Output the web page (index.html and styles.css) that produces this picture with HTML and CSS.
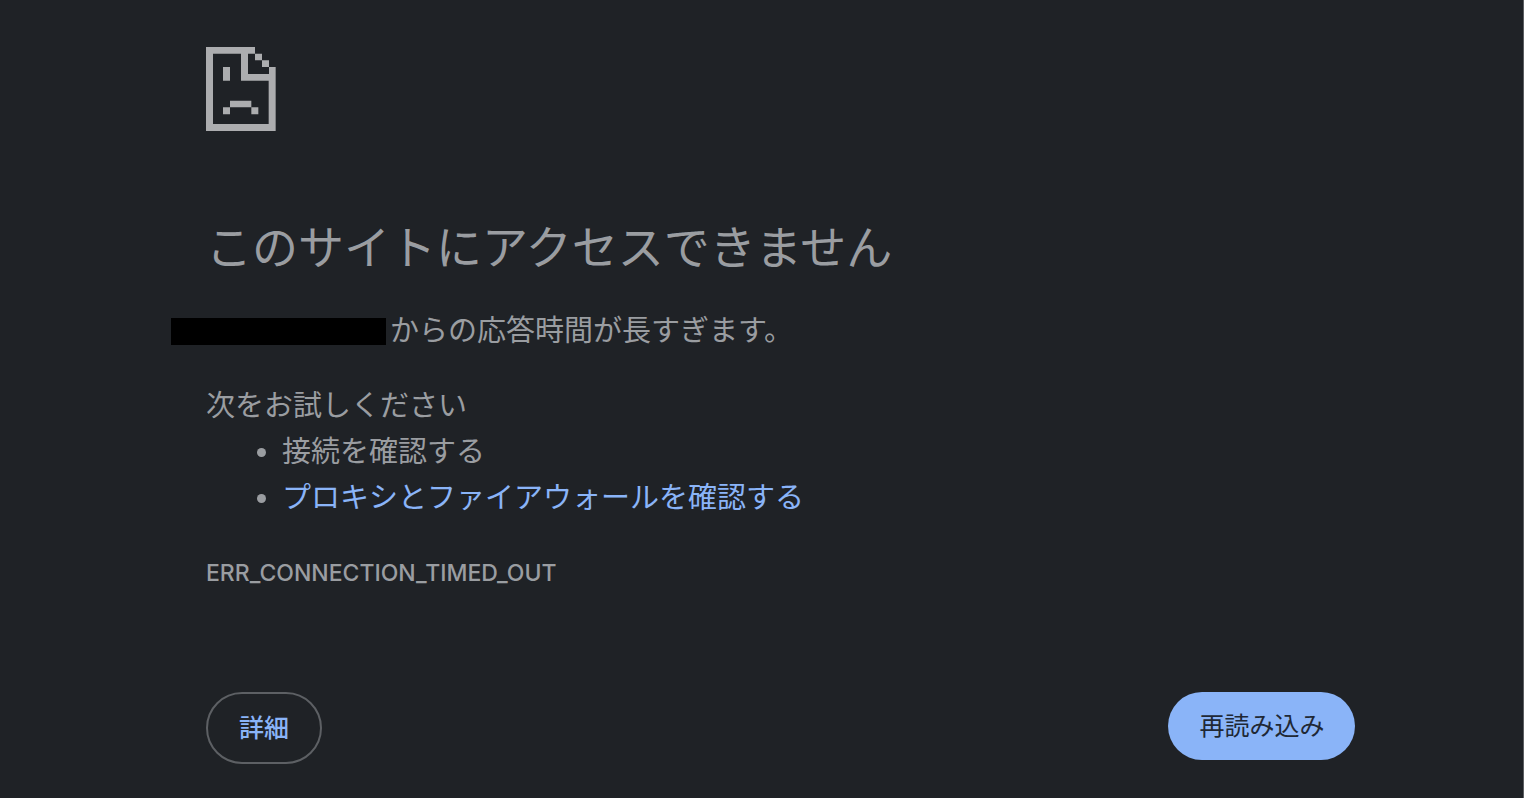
FILE: index.html
```html
<!DOCTYPE html>
<html lang="ja">
<head>
<meta charset="utf-8">
<meta name="viewport" content="width=device-width, initial-scale=1">
<title>このサイトにアクセスできません</title>
<link rel="stylesheet" href="styles.css">
</head>
<body>
<main class="error-page">
  <svg class="error-icon" viewBox="0 0 210 252" aria-hidden="true">
    <path d="M0 0H147V20H126V81H189V60H209V252H0ZM21 20V231H188V101H105V20Z" fill-rule="evenodd"/>
    <path d="M147 20H168V40H147ZM168 40H189V60H168ZM51 60H72V101H51ZM72 161H136V181H72ZM51 181H72V202H51ZM136 181H157V202H136Z"/>
  </svg>
  <h1 class="title">このサイトにアクセスできません</h1>
  <p class="summary"><span class="redacted"></span>からの応答時間が長すぎます。</p>
  <section class="suggestions">
    <p class="suggestions-label">次をお試しください</p>
    <ul class="suggestions-list">
      <li>接続を確認する</li>
      <li><a class="link" href="#proxy">プロキシとファイアウォールを確認する</a></li>
    </ul>
  </section>
  <p class="error-code">ERR_CONNECTION_TIMED_OUT</p>
  <div class="actions">
    <button class="button button-details" type="button">詳細</button>
    <button class="button button-reload" type="button">再読み込み</button>
  </div>
</main>
</body>
</html>
```
FILE: styles.css
```css
* {
  box-sizing: border-box;
}

body {
  margin: 0;
  min-height: 100vh;
  background: #1f2226;
  border-right: 1px solid #5c5f62;
  color: #9a9da1;
  font-family: Roboto, "Noto Sans CJK JP", sans-serif;
  font-size: 29px;
  line-height: 46px;
}

.error-page {
  display: flex;
  flex-direction: column;
  padding: 47px 11% 32px 206px;
}

.error-icon {
  display: block;
  width: 70px;
  height: 84px;
  fill: #acadaf;
}

.title {
  margin: 83px 0 0;
  font-size: 46px;
  font-weight: 400;
  line-height: 68px;
}

.summary {
  display: flex;
  align-items: center;
  margin: 26px 0 0 -35px;
}

.redacted {
  width: 215px;
  height: 27px;
  margin-right: 4px;
  background: #000;
}

.suggestions {
  margin-top: 29px;
}

.suggestions-label {
  margin: 0;
}

.suggestions-list {
  margin: 0;
  padding-left: 76px;
}

.link {
  color: #8ab4f8;
  text-decoration: none;
}

.error-code {
  margin: 29px 0 0;
  font-family: Inter, sans-serif;
  font-size: 23px;
  font-weight: 500;
}

.actions {
  display: flex;
  align-items: flex-start;
  justify-content: space-between;
  margin-top: 96px;
}

.button {
  padding: 2px 31px 0;
  border: 0;
  border-radius: 36px;
  font-family: inherit;
  font-size: 25px;
  line-height: 66px;
  cursor: pointer;
}

.button-details {
  border: 2px solid #5d6064;
  background: transparent;
  color: #8ab4f8;
  font-weight: 500;
}

.button-reload {
  background: #8ab4f8;
  color: #202835;
}
```
